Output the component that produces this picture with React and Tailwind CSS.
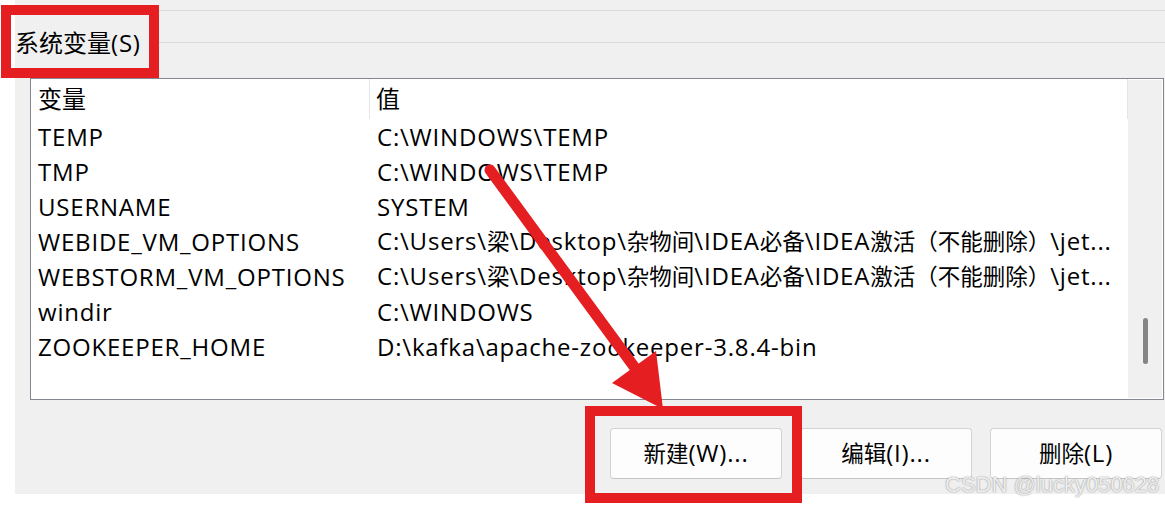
import React from "react";

const rows = [
  ["TEMP", "C:\\WINDOWS\\TEMP"],
  ["TMP", "C:\\WINDOWS\\TEMP"],
  ["USERNAME", "SYSTEM"],
  ["WEBIDE_VM_OPTIONS", "C:\\Users\\梁\\Desktop\\杂物间\\IDEA必备\\IDEA激活（不能删除）\\jet..."],
  ["WEBSTORM_VM_OPTIONS", "C:\\Users\\梁\\Desktop\\杂物间\\IDEA必备\\IDEA激活（不能删除）\\jet..."],
  ["windir", "C:\\WINDOWS"],
  ["ZOOKEEPER_HOME", "D:\\kafka\\apache-zookeeper-3.8.4-bin"],
];

const font = "font-['Open_Sans','Noto_Sans_CJK_SC',sans-serif]";
const CJK = /([\u3000-\u9fff\uff00-\uffef]+)/;
const isCJK = /[\u3000-\u9fff\uff00-\uffef]/;

// Latin runs use a wide Segoe-like setting, CJK runs keep their natural size
function T({ text, big }) {
  const parts = text.split(CJK);
  const cjkCls = big ? "text-[24px] tracking-normal" : "text-[22.5px] tracking-normal";
  return (
    <span className="text-[24px] tracking-[0.8px]">
      {parts.map((p, i) =>
        isCJK.test(p) ? (
          <span key={i} className={cjkCls}>
            {p}
          </span>
        ) : (
          <span key={i}>{p}</span>
        )
      )}
    </span>
  );
}

function Btn({ label }) {
  return (
    <div className="w-[172px] h-[51px] rounded-[4px] border border-[#d3d3d3] border-b-[#c4c4c4] bg-[#fdfdfd] flex items-center justify-center text-black leading-none">
      <T text={label} />
    </div>
  );
}

export default function App() {
  return (
    <div className={`relative w-[1165px] h-[505px] bg-white overflow-hidden ${font}`}>
      <div className="ml-[15px] w-[1150px] h-[494px] bg-[#f0f0f0] pt-[10px]">
        <div className="h-px bg-[#dadada]" />
        <div className="flex h-[67px]">
          <div className="mt-[17px] h-[30px] leading-[30px] text-black whitespace-nowrap pr-2">
            <T text="系统变量(S)" big />
          </div>
          <div className="flex-1 h-px bg-[#dadada] mt-[31px]" />
        </div>
        <div className="ml-[15px] w-[1134px] h-[322px] border border-[#838790] bg-white flex">
          <div className="flex-1 flex flex-col text-black leading-none">
            <div className="h-[40px] flex">
              <div className="w-[339px] pl-[7px] flex items-center border-r border-[#e5e5e5]">
                <T text="变量" big />
              </div>
              <div className="flex-1 pl-[6px] flex items-center border-r border-[#e5e5e5]">
                <T text="值" big />
              </div>
            </div>
            {rows.map(([k, v]) => (
              <div key={k} className="h-[35px] flex items-center whitespace-nowrap">
                <div className="w-[340px] pl-[7px]">
                  <T text={k} />
                </div>
                <div className="flex-1 pl-[6px]">
                  <T text={v} />
                </div>
              </div>
            ))}
          </div>
          <div className="w-[34px] my-px mr-px bg-[#f0f0f0] flex justify-center pt-[238px]">
            <div className="w-[5px] h-[46px] rounded-full bg-[#858585]" />
          </div>
        </div>
        <div className="mt-[28px] flex justify-end gap-[18px] pr-[3px]">
          <Btn label="新建(W)..." />
          <Btn label="编辑(I)..." />
          <Btn label="删除(L)" />
        </div>
      </div>

      {/* annotations */}
      <div className="absolute left-[1px] top-[5px] w-[158px] h-[73px] border-[10px] border-[#e51e21]" />
      <div className="absolute left-[585px] top-[406px] w-[217px] h-[97px] border-[10px] border-[#e51e21]" />
      <svg className="absolute left-0 top-0" width="1165" height="505" viewBox="0 0 1165 505">
        <line x1="490" y1="170" x2="638" y2="372" stroke="#e51e21" strokeWidth="11" strokeLinecap="round" />
        <polygon points="656,351 612,383 663,409" fill="#e51e21" />
      </svg>
      <div className="absolute left-[945px] top-[472px] text-[22px] leading-[26px] font-['Liberation_Sans',sans-serif] text-[#ededed] [text-shadow:0_0_1.5px_#7a7a7a] whitespace-nowrap">
        CSDN @lucky050628
      </div>
    </div>
  );
}
